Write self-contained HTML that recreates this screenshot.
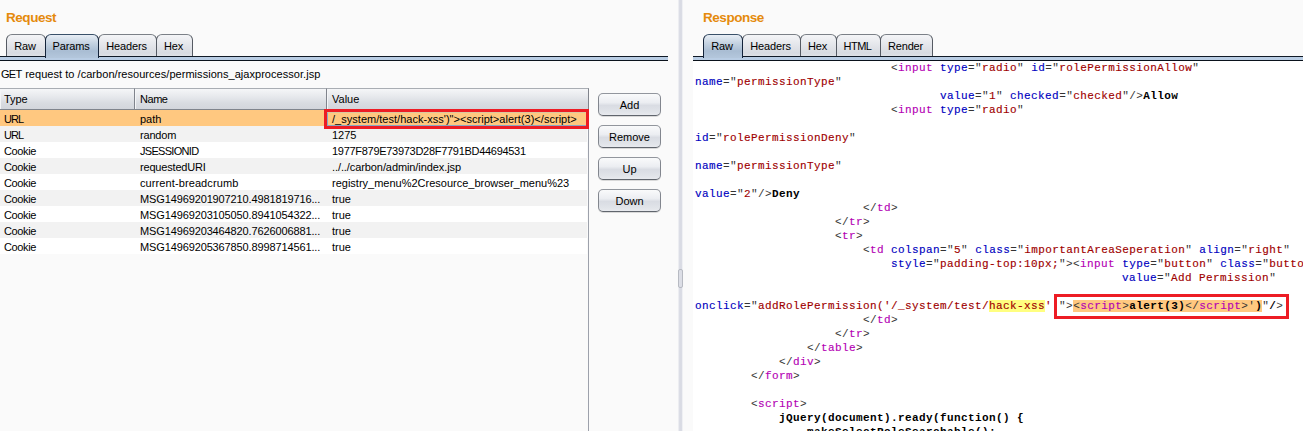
<!DOCTYPE html>
<html><head><meta charset="utf-8">
<style>
html,body{margin:0;padding:0;}
body{width:1303px;height:431px;overflow:hidden;background:#fafafa;position:relative;font-family:"Liberation Sans",Arial,sans-serif;font-size:11px;color:#000;}
.abs{position:absolute;}
.title{position:absolute;top:10px;font-weight:bold;font-size:13.5px;letter-spacing:-0.45px;color:#e58a0c;line-height:16px;}
.tab{position:absolute;top:34px;height:22px;box-sizing:border-box;border:1px solid #7b8087;border-left-color:#555a63;border-right-color:#555a63;border-bottom:none;border-radius:6px 6px 0 0;background:linear-gradient(#f4f5f7,#e3e5ea 50%,#d8dbe1 85%,#dfe1e6);font-size:11px;letter-spacing:-0.15px;line-height:22px;text-align:center;color:#000;padding-right:2px;}
.tab.sel{height:24px;border-color:#3a5169 #13233a #13233a #13233a;background:linear-gradient(#e8eef5,#c5d3e2 35%,#a9bdd3 70%,#b4c7dc);z-index:2;}
.tabline{position:absolute;top:56px;height:5px;box-sizing:border-box;border-top:1px solid #101a26;border-bottom:1px solid #0a121c;background:#b9cde4;}
.th{position:absolute;top:88px;height:22px;box-sizing:border-box;border:1px solid #a9adb3;border-right-color:#80848c;border-left:none;border-bottom:1px solid #80858d;background:linear-gradient(#f5f6f8,#e6e8ec 40%,#d9dce1 70%,#d3d6dc);box-shadow:inset 1px 0 0 #f4f5f7;line-height:21px;padding-left:5px;}
.row{position:absolute;left:0;width:587px;height:16px;line-height:16px;white-space:nowrap;}
.row span{position:absolute;top:1px;}
.c1{left:4px}.c2{left:140px}.c3{left:332px}
.odd{background:#f2f2f2}.even{background:#fff}
.btn{position:absolute;left:598px;width:63px;height:23px;box-sizing:border-box;border:1px solid #8a8e95;border-radius:5px;background:linear-gradient(#f9fafb,#eceef2 40%,#d9dce3 55%,#e1e4e9 85%,#e8eaee);border-color:#92969d #82868e #60656d;text-align:center;line-height:23px;font-size:11px;box-shadow:0 1px 0 #d9d9d9;}
pre{margin:0;position:absolute;left:695px;top:61px;font-family:"Liberation Mono","Courier New",monospace;font-size:11px;letter-spacing:0.4px;line-height:14px;color:#333;white-space:pre;}
.t{color:#b400b4;-webkit-text-stroke:0.15px #b400b4}.a{color:#0000c0;-webkit-text-stroke:0.15px #0000c0}.v{color:#a00000;-webkit-text-stroke:0.15px #a00000}.b{font-weight:bold;color:#000}
.y{background:#ffff80}.o{background:#ffc880}
</style></head><body>
<!-- left panel -->
<div class="title" style="left:6px">Request</div>
<div class="tabline" style="left:0;width:668px"></div>
<div class="tab" style="left:6px;width:40px">Raw</div>
<div class="tab sel" style="left:45px;width:54px">Params</div>
<div class="tab" style="left:98px;width:59px">Headers</div>
<div class="tab" style="left:156px;width:37px">Hex</div>
<div class="abs" style="left:1px;top:67px;line-height:14px;white-space:nowrap;letter-spacing:0.04px"><span style="letter-spacing:-0.7px">GE</span>T request to /carbon/resources/permissions_ajaxprocessor.jsp</div>

<div class="abs" style="left:588px;top:88px;width:1px;height:343px;background:#9da1ab"></div>
<div class="th" style="left:0;width:135px;padding-left:4px;letter-spacing:-0.1px">Type</div>
<div class="th" style="left:135px;width:192px;letter-spacing:-0.45px">Name</div>
<div class="th" style="left:327px;width:262px">Value</div>

<div class="row" style="top:110px;background:#ffc880"><span class="c1" style="letter-spacing:-1px">URL</span><span class="c2">path</span><span class="c3" style="letter-spacing:0.025px">/_system/test/hack-xss')"&gt;&lt;script&gt;alert(3)&lt;/script&gt;</span></div>
<div class="row odd" style="top:126px"><span class="c1" style="letter-spacing:-1px">URL</span><span class="c2" style="letter-spacing:-0.2px">random</span><span class="c3">1275</span></div>
<div class="row even" style="top:142px"><span class="c1" style="letter-spacing:-0.38px">Cookie</span><span class="c2" style="letter-spacing:-0.7px">JSESSIONID</span><span class="c3" style="letter-spacing:-0.29px">1977F879E73973D28F7791BD44694531</span></div>
<div class="row odd" style="top:158px"><span class="c1" style="letter-spacing:-0.38px">Cookie</span><span class="c2" style="letter-spacing:-0.18px">requestedURI</span><span class="c3" style="letter-spacing:-0.09px">../../carbon/admin/index.jsp</span></div>
<div class="row even" style="top:174px"><span class="c1" style="letter-spacing:-0.38px">Cookie</span><span class="c2" style="letter-spacing:0.1px">current-breadcrumb</span><span class="c3">registry_menu%2Cresource_browser_menu%23</span></div>
<div class="row odd" style="top:190px"><span class="c1" style="letter-spacing:-0.38px">Cookie</span><span class="c2" style="letter-spacing:-0.125px">MSG14969201907210.4981819716...</span><span class="c3">true</span></div>
<div class="row even" style="top:206px"><span class="c1" style="letter-spacing:-0.38px">Cookie</span><span class="c2" style="letter-spacing:-0.125px">MSG14969203105050.8941054322...</span><span class="c3">true</span></div>
<div class="row odd" style="top:222px"><span class="c1" style="letter-spacing:-0.38px">Cookie</span><span class="c2" style="letter-spacing:-0.125px">MSG14969203464820.7626006881...</span><span class="c3">true</span></div>
<div class="row even" style="top:238px"><span class="c1" style="letter-spacing:-0.38px">Cookie</span><span class="c2" style="letter-spacing:-0.125px">MSG14969205367850.8998714561...</span><span class="c3">true</span></div>
<div class="abs" style="left:324px;top:109px;width:265px;height:20px;box-sizing:border-box;border:3px solid #ed1c24"><div style="width:100%;height:100%;box-sizing:border-box;border-left:1px solid #8aa6c4;border-bottom:1px solid #8aa6c4;border-top:1px solid #d9c9a0"></div></div>

<div class="btn" style="top:93px">Add</div>
<div class="btn" style="top:125px">Remove</div>
<div class="btn" style="top:157px">Up</div>
<div class="btn" style="top:189px">Down</div>

<!-- divider -->
<div class="abs" style="left:678px;top:0;width:5px;height:431px;background:linear-gradient(90deg,#ecedf1 0,#ecedf1 1px,#dcdee6 1px,#d8dae3 3px,#dcdee6 4px,#eff0f3 4px)"></div>
<div class="abs" style="left:678px;top:269px;width:5px;height:19px;box-sizing:border-box;border:1px solid #b7bac2;border-radius:2px;background:#dcdee6"></div>

<!-- right panel -->
<div class="title" style="left:703px">Response</div>
<div class="tabline" style="left:693px;width:610px"></div>
<div class="tab sel" style="left:703px;width:40px">Raw</div>
<div class="tab" style="left:742px;width:59px">Headers</div>
<div class="tab" style="left:800px;width:37px">Hex</div>
<div class="tab" style="left:836px;width:45px;letter-spacing:-0.5px">HTML</div>
<div class="tab" style="left:880px;width:53px">Render</div>
<div class="abs" style="left:693px;top:61px;width:610px;height:370px;background:#fff"></div>
<div class="abs" style="left:1054px;top:294px;width:235px;height:25px;box-sizing:border-box;border:3px solid #ed1c24"></div>
<pre>                            &lt;<span class="t">input</span> <span class="a">type</span>="<span class="v">radio</span>" <span class="a">id</span>="<span class="v">rolePermissionAllow</span>"
<span class="a">name</span>="<span class="v">permissionType</span>"
                                   <span class="a">value</span>="<span class="v">1</span>" <span class="a">checked</span>="<span class="v">checked</span>"/&gt;<span class="b">Allow</span>
                            &lt;<span class="t">input</span> <span class="a">type</span>="<span class="v">radio</span>"

<span class="a">id</span>="<span class="v">rolePermissionDeny</span>"

<span class="a">name</span>="<span class="v">permissionType</span>"

<span class="a">value</span>="<span class="v">2</span>"/&gt;<span class="b">Deny</span>
                        &lt;/<span class="t">td</span>&gt;
                    &lt;/<span class="t">tr</span>&gt;
                    &lt;<span class="t">tr</span>&gt;
                        &lt;<span class="t">td</span> <span class="a">colspan</span>="<span class="v">5</span>" <span class="a">class</span>="<span class="v">importantAreaSeperation</span>" <span class="a">align</span>="<span class="v">right</span>"
                            <span class="a">style</span>="<span class="v">padding-top:10px;</span>"&gt;&lt;<span class="t">input</span> <span class="a">type</span>="<span class="v">button</span>" <span class="a">class</span>="<span class="v">button</span>"
                                                             <span class="a">value</span>="<span class="v">Add Permission</span>"

<span class="a">onclick</span>="<span class="v">addRolePermission('/_system/test/<span class="y">hack-xss</span>'</span> "&gt;<span class="o">&lt;<span class="t">script</span>&gt;<span class="b">alert(3)</span>&lt;/<span class="t">script</span>&gt;'<span class="b">)</span></span>"<span class="b">/</span>&gt;
                        &lt;/<span class="t">td</span>&gt;
                    &lt;/<span class="t">tr</span>&gt;
                &lt;/<span class="t">table</span>&gt;
            &lt;/<span class="t">div</span>&gt;
        &lt;/<span class="t">form</span>&gt;

        &lt;<span class="t">script</span>&gt;
            <span class="b">jQuery(document).ready(function() {</span>
                <span class="b">makeSelectRoleSearchable();</span>
</pre>
</body></html>
